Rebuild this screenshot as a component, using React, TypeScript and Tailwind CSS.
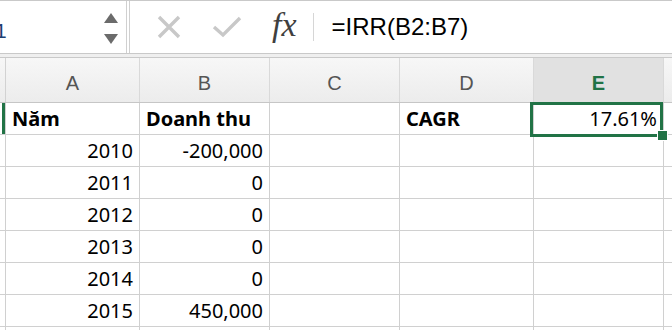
import React from 'react';

const cols = [
  { key: 'A', w: 'w-[134px]' },
  { key: 'B', w: 'w-[130px]' },
  { key: 'C', w: 'w-[130px]' },
  { key: 'D', w: 'w-[134px]' },
  { key: 'E', w: 'w-[130px]' },
];

type Cell = { text?: string; bold?: boolean; right?: boolean };

const rows: Cell[][] = [
  [{ text: 'Năm', bold: true }, { text: 'Doanh thu', bold: true }, {}, { text: 'CAGR', bold: true }, { text: '17.61%', right: true }],
  [{ text: '2010', right: true }, { text: '-200,000', right: true }, {}, {}, {}],
  [{ text: '2011', right: true }, { text: '0', right: true }, {}, {}, {}],
  [{ text: '2012', right: true }, { text: '0', right: true }, {}, {}, {}],
  [{ text: '2013', right: true }, { text: '0', right: true }, {}, {}, {}],
  [{ text: '2014', right: true }, { text: '0', right: true }, {}, {}, {}],
  [{ text: '2015', right: true }, { text: '450,000', right: true }, {}, {}, {}],
  [{}, {}, {}, {}, {}],
];

export default function App() {
  return (
    <div className="relative w-[672px] h-[330px] overflow-hidden bg-white">
      {/* Formula bar */}
      <div className="flex h-[54px] border-t border-b border-[#c9c9c9] bg-white">
        <div className="relative w-[127px] overflow-hidden border-r border-[#d0d0d0]">
          {/* name box, scrolled so only the tail of "E1" shows */}
          <span
            className="absolute left-[-19px] top-[14px] text-[21px] text-[#1d3f73]"
            style={{ fontFamily: '"Liberation Sans", sans-serif' }}
          >
            E1
          </span>
          <div className="absolute left-[104px] top-[12px] w-0 h-0 border-l-[7px] border-r-[7px] border-b-[10px] border-l-transparent border-r-transparent border-b-[#6b6b6b]" />
          <div className="absolute left-[104px] top-[33px] w-0 h-0 border-l-[7px] border-r-[7px] border-t-[10px] border-l-transparent border-r-transparent border-t-[#6b6b6b]" />
        </div>
        <div className="w-[3px] border-r border-[#d0d0d0]" />
        <div className="flex flex-1 items-center">
          <svg className="ml-[27px]" width="24" height="24" viewBox="0 0 24 24">
            <path d="M2 2 L22 22 M22 2 L2 22" stroke="#c8c8c8" strokeWidth="3.4" fill="none" />
          </svg>
          <svg className="ml-[31px]" width="30" height="22" viewBox="0 0 30 22">
            <path d="M2 11 L11 19 L28 2" stroke="#c8c8c8" strokeWidth="3.4" fill="none" />
          </svg>
          <span
            className="ml-[30px] italic text-[34px] leading-none text-[#3f3f3f] -mt-[4px]"
            style={{ fontFamily: '"Liberation Serif", serif' }}
          >
            fx
          </span>
          <div className="ml-[16px] w-px h-[28px] bg-[#d6d6d6]" />
          <span
            className="ml-[18px] text-[24px] text-black"
            style={{ fontFamily: '"Liberation Sans", sans-serif' }}
          >
            =IRR(B2:B7)
          </span>
        </div>
      </div>
      <div className="h-[4px] bg-[#efefef] border-b border-[#c9c9c9]" />

      {/* Column headers */}
      <div
        className="flex h-[45px] border-b border-[#c6c6c6] bg-gradient-to-b from-[#f7f7f7] to-[#ececec]"
        style={{ fontFamily: '"Liberation Sans", sans-serif' }}
      >
        <div className="w-[6px] border-r border-[#d2d2d2]" />
        {cols.map((c) => (
          <div
            key={c.key}
            className={`${c.w} flex items-center justify-center pt-[5px] border-r border-[#d9d9d9] text-[20px] ${
              c.key === 'E' ? 'bg-[#e1e1e1] text-[#217346] font-bold' : 'text-[#555555]'
            }`}
          >
            {c.key}
          </div>
        ))}
        <div className="flex-1" />
      </div>

      {/* Grid */}
      <div style={{ fontFamily: '"Noto Sans", sans-serif' }}>
        {rows.map((row, ri) => (
          <div key={ri} className="flex h-[32px] border-b border-[#d0d0d0]">
            <div className="relative w-[6px] border-r border-[#d0d0d0]">
              {ri === 0 && <div className="absolute left-[2px] top-0 w-[3px] h-full bg-[#217346]" />}
            </div>
            {row.map((cell, ci) => (
              <div
                key={ci}
                className={`${cols[ci].w} flex items-end pb-[2px] px-[6px] border-r border-[#d0d0d0] text-[20px] leading-[26px] text-black ${
                  cell.right ? 'justify-end' : 'justify-start'
                } ${cell.bold ? 'font-bold' : ''}`}
              >
                {cell.text}
              </div>
            ))}
            <div className="flex-1" />
          </div>
        ))}
      </div>

      {/* Selection */}
      <div className="absolute left-[530px] top-[102px] w-[133px] h-[35px] border-[3px] border-[#217346]" />
      <div className="absolute left-[657px] top-[130px] w-[11px] h-[11px] bg-[#217346] border border-white" />
    </div>
  );
}
